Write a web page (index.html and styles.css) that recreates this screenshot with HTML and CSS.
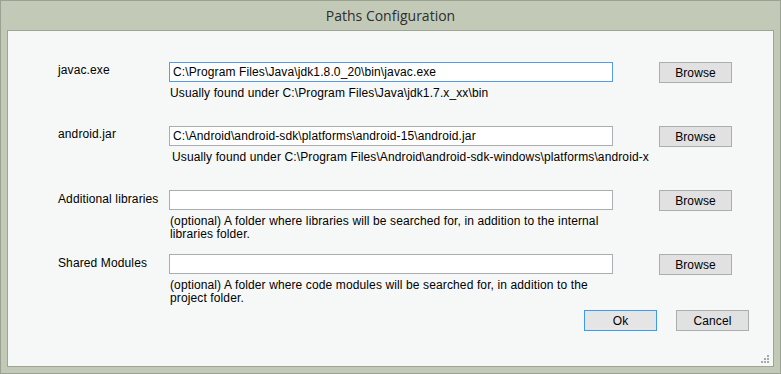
FILE: index.html
```html
<!DOCTYPE html>
<html>
<head>
    <link rel="stylesheet" href="styles.css">
</head>
<body>
    <div class="window">
        <div class="title">Paths Configuration</div>
        <div class="client">
            <div class="rows">
                <div class="row">
                    <label class="label" for="javac">javac.exe</label>
                    <input class="field focused" type="text" id="javac" value="C:\Program Files\Java\jdk1.8.0_20\bin\javac.exe">
                    <button class="btn browse">Browse</button>
                    <div class="hint">Usually found under C:\Program Files\Java\jdk1.7.x_xx\bin</div>
                </div>
                <div class="row">
                    <label class="label" for="android">android.jar</label>
                    <input class="field" type="text" id="android" value="C:\Android\android-sdk\platforms\android-15\android.jar">
                    <button class="btn browse">Browse</button>
                    <div class="hint nowrap">Usually found under C:\Program Files\Android\android-sdk-windows\platforms\android-x</div>
                </div>
                <div class="row">
                    <label class="label low" for="libs">Additional libraries</label>
                    <input class="field" type="text" id="libs" value="">
                    <button class="btn browse">Browse</button>
                    <div class="hint">(optional) A folder where libraries will be searched for, in addition to the internal libraries folder.</div>
                </div>
                <div class="row last">
                    <label class="label low" for="shared">Shared Modules</label>
                    <input class="field" type="text" id="shared" value="">
                    <button class="btn browse">Browse</button>
                    <div class="hint">(optional) A folder where code modules will be searched for, in addition to the project folder.</div>
                </div>
            </div>
            <div class="actions">
                <button class="btn default">Ok</button>
                <button class="btn">Cancel</button>
            </div>
            <svg class="grip" width="9" height="9" viewBox="0 0 9 9">
                <rect x="6" y="0" width="2" height="2" fill="#a6aaa6"/>
                <rect x="3" y="3" width="2" height="2" fill="#a6aaa6"/>
                <rect x="6" y="3" width="2" height="2" fill="#a6aaa6"/>
                <rect x="0" y="6" width="2" height="2" fill="#a6aaa6"/>
                <rect x="3" y="6" width="2" height="2" fill="#a6aaa6"/>
                <rect x="6" y="6" width="2" height="2" fill="#a6aaa6"/>
            </svg>
        </div>
    </div>
</body>
</html>
```

FILE: styles.css
```css
body
{
    margin: 0;
    font-family: "Liberation Sans", Arial, sans-serif;
    font-size: 12px;
    letter-spacing: 0.12px;
    color: #000;
}
.window
{
    width: 781px;
    height: 374px;
    box-sizing: border-box;
    border: 1px solid #9ba291;
    background-color: #c2cab7;
}
.title
{
    height: 29px;
    line-height: 30px;
    text-align: center;
    font-family: "Open Sans", "Noto Sans", sans-serif;
    font-size: 14px;
    letter-spacing: 0;
    color: #2e2e2e;
}
.client
{
    position: relative;
    margin: 0 6px;
    height: 337px;
    box-sizing: border-box;
    border: 1px solid #9ea596;
    background-color: #f6f8f8;
}
.rows
{
    padding: 31px 0 0 50px;
}
.row
{
    display: grid;
    grid-template-columns: 111px 444px 46px 73px;
    grid-template-rows: 20px auto;
    height: 64px;
}
.row.last
{
    height: 56px;
}
.label
{
    grid-column: 1;
    grid-row: 1;
    line-height: 16px;
}
.label.low
{
    line-height: 19px;
}
.field
{
    grid-column: 2;
    grid-row: 1;
    height: 20px;
    box-sizing: border-box;
    margin: 0;
    padding: 0 3px;
    border: 1px solid #abadb3;
    background-color: #fff;
    font-family: "Liberation Sans", Arial, sans-serif;
    font-size: 12px;
    letter-spacing: 0.12px;
    color: #000;
    outline: none;
}
.field.focused
{
    border-color: #569de5;
}
.hint
{
    grid-column: 2;
    grid-row: 2;
    padding: 5px 0 0 1px;
    line-height: 13px;
}
.hint.nowrap
{
    white-space: nowrap;
    padding-left: 3px;
}
.btn
{
    height: 21px;
    width: 73px;
    box-sizing: border-box;
    margin: 0;
    padding: 0;
    border: 1px solid #adadad;
    background-color: #e1e1e1;
    font-family: "Liberation Sans", Arial, sans-serif;
    font-size: 12px;
    letter-spacing: 0.12px;
    color: #000;
}
.browse
{
    grid-column: 4;
    grid-row: 1;
}
.btn.default
{
    border-color: #3c9af0;
    background-color: #e5e5e5;
}
.actions
{
    display: flex;
    justify-content: flex-end;
    gap: 19px;
    padding-right: 24px;
}
.grip
{
    position: absolute;
    right: 3px;
    bottom: 2px;
}
```
